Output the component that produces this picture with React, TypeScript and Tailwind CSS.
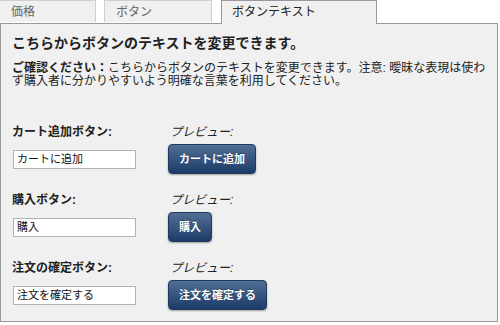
const rows = [
  { label: "カート追加ボタン:", value: "カートに追加" },
  { label: "購入ボタン:", value: "購入" },
  { label: "注文の確定ボタン:", value: "注文を確定する" },
];

export default function App() {
  return (
    <div className="w-[500px] h-[325px] bg-white overflow-hidden text-[#222] font-['Liberation_Sans','Noto_Sans_CJK_JP',sans-serif]">
      <div className="flex h-[23px] items-start">
        <div className="-ml-px w-[97px] h-[22px] border border-b-0 border-[#cfcfcf] bg-[#f0f0f0] pl-[11px] text-[12px] leading-[23px] text-[#666]">
          価格
        </div>
        <div className="ml-[8px] w-[108px] h-[22px] border border-b-0 border-[#cfcfcf] bg-[#f0f0f0] pl-[11px] text-[12px] leading-[23px] text-[#666]">
          ボタン
        </div>
        <div className="relative z-10 ml-[9px] w-[156px] h-[24px] border border-b-0 border-[#999] bg-[#f0f0f0] pl-[10px] text-[12px] leading-[23px] text-[#222]">
          ボタンテキスト
        </div>
      </div>
      <div className="w-[498px] h-[299px] border border-[#999] bg-[#f0f0f0] px-[11px] pt-[9px]">
        <h1 className="text-[14px] leading-[20px] font-bold">こちらからボタンのテキストを変更できます。</h1>
        <p className="mt-[9px] -mr-[6px] text-[12px] leading-[13px]">
          <span className="font-bold">ご確認ください：</span>
          こちらからボタンのテキストを変更できます。注意: 曖昧な表現は使わず購入者に分かりやすいよう明確な言葉を利用してください。
        </p>
        <div className="mt-[37px] flex flex-col gap-[19px]">
          {rows.map((r) => (
            <div key={r.label} className="grid grid-cols-[156px_1fr] gap-y-[5px] items-center">
              <div className="text-[12px] leading-[14px] font-bold">{r.label}</div>
              <div className="pl-[2px] text-[12px] leading-[14px] italic">プレビュー:</div>
              <div className="ml-px w-[123px] h-[19px] border border-[#b3b3b3] bg-white pl-[3px] text-[11px] leading-[17px] text-[#111]">
                {r.value}
              </div>
              <div>
                <button className="h-[30px] rounded-[4px] border border-[#1f3a5f] bg-gradient-to-b from-[#516f95] to-[#1c3b68] px-[10px] text-[11px] font-bold text-white shadow-[0_1px_2px_rgba(0,0,0,0.35)] [text-shadow:0_-1px_0_rgba(0,0,0,0.3)]">
                  {r.value}
                </button>
              </div>
            </div>
          ))}
        </div>
      </div>
    </div>
  );
}
